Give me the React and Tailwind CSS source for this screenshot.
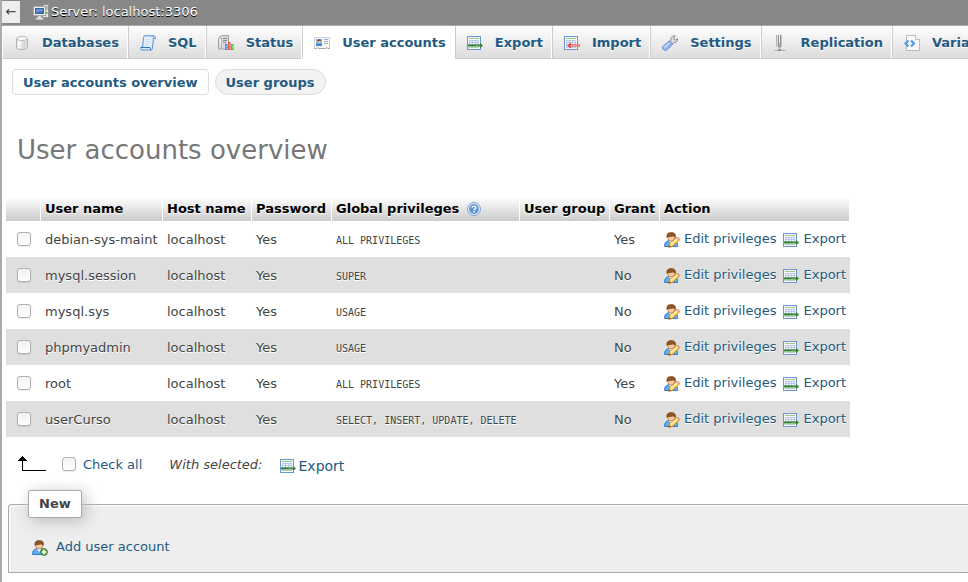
import React from "react";

function Icon({ children, className = "" }) {
  return (
    <svg
      width="16"
      height="16"
      viewBox="0 0 16 16"
      aria-hidden="true"
      className={"shrink-0 " + className}
    >
      {children}
    </svg>
  );
}

function ServerIcon() {
  return (
    <Icon>
      <path d="M9.500 2l2-1.500h4v12l-1 1h-5z" fill="#dfe1dd" stroke="#90948d" />
      <path d="M11.500 3h3M11.500 5h3" stroke="#777" />
      <path d="M13 8h1.500v1.500H13z" fill="#55a630" />
      <rect x=".5" y="2.500" width="12" height="9" fill="#eceeea" stroke="#a5a8a2" />
      <rect x="2" y="4" width="9" height="6" fill="#3465a4" />
      <path d="M3 5h7v2L3 9z" fill="#6b93c8" />
      <path d="M5 12h3v2h2v1.500H3V14h2z" fill="#e8e8e8" stroke="#bbb" strokeWidth=".5" />
    </Icon>
  );
}

function DatabaseIcon() {
  return (
    <Icon>
      <path d="M2.500 3.500v9c0 1.300 2.500 2 5.500 2s5.500-.7 5.500-2v-9z" fill="#e8e8e8" stroke="#b0b0b0" />
      <path d="M4.500 5v8.500M6 5.500v8" stroke="#fff" />
      <path d="M9 6v8M10.500 5.500v8M12 5v8" stroke="#d4d4d4" />
      <ellipse cx="8" cy="3.500" rx="5.500" ry="2" fill="#f7f7f7" stroke="#bdbdbd" />
    </Icon>
  );
}

function SqlIcon() {
  return (
    <Icon>
      <path d="M4.500.8h9.700c1 0 1.300 1.200 1.300 2.700h-2l-1 9.500c-.1 1.300-.8 2-1.500 2H1.800C.8 15 .5 14 .5 12.500h2l1-9C3.600 2 3.800.8 4.500.8z" fill="#d6e8fb" stroke="#5b94d2" />
      <path d="M5 2.300h6.800L10.800 12H4z" fill="#eaf4ff" />
      <path d="M5.500 4.500h5M5.200 6.500h5M5 8.500h5M4.700 10.500h5" stroke="#c6def7" />
      <path d="M1 12.500h9l1 2.500" stroke="#3972b4" fill="none" />
      <path d="M13.500 3.500c0-1.500-.5-2-1.500-2.500" stroke="#7aabe0" fill="none" />
    </Icon>
  );
}

function StatusIcon() {
  return (
    <Icon>
      <path d="M.5 3l3-2.500h7v11l-2.500 2.500h-7.500z" fill="#d9d9d9" stroke="#a2a2a2" />
      <path d="M.5 3h3v11" stroke="#b5b5b5" fill="#eee" />
      <path d="M5 3.500h4M5 5.500h4M5 7.500h3" stroke="#888" />
      <rect x="7" y="9" width="2.500" height="6" fill="#4d7ff0" />
      <rect x="7.800" y="10" width="1" height="4" fill="#8db0ff" />
      <rect x="10" y="7" width="2.500" height="8" fill="#f04a3a" />
      <rect x="10.800" y="8" width="1" height="6" fill="#ff9488" />
      <rect x="13" y="9" width="2.500" height="6" fill="#41b838" />
      <rect x="13.800" y="10" width="1" height="4" fill="#93e689" />
    </Icon>
  );
}

function CardIcon() {
  return (
    <Icon>
      <path d="M.5 2.500h15v11h-1.500l-1-1-1.500 1h-6l-1.500-1-1 1H.5z" fill="#f8f8f8" stroke="#cfcfcf" />
      <path d="M.5 13.500h2l1-1 1 1h7l1-1 1 1h2" stroke="#a5a5a5" fill="none" />
      <rect x="2" y="4" width="6" height="7" fill="#6cb1f3" />
      <path d="M2 11c0-2 1-2.500 3-2.500S8 9 8 11z" fill="#3485db" />
      <circle cx="5" cy="6.700" r="1.800" fill="#efb987" />
      <path d="M3.200 6.200c0-2.200 3.600-2.200 3.600 0-1-.7-2-.7-3.600 0z" fill="#774317" />
      <path d="M10 4.500h4M10 6.500h4M10 8.500h4" stroke="#9eb1c4" />
    </Icon>
  );
}

function SheetShape() {
  return (
    <>
      <rect x=".5" y="1.500" width="13" height="13" fill="#f5f9ff" stroke="#6c95d3" />
      <path d="M2 3.500h10" stroke="#9acb7f" />
      <path d="M2.500 5.500h9M2.500 7.500h9M2.500 9.500h9M2.500 12.500h9M2.500 5.500v7M5.500 5.500v7M8.500 5.500v7M11.500 5.500v7" stroke="#b4c8e6" fill="none" />
    </>
  );
}

function ExportIcon({ className }) {
  return (
    <Icon className={className}>
      <SheetShape />
      <path d="M1 9.500h12V8l3 2.500-3 2.500v-1.500H1z" fill="#2c7a29" />
      <path d="M1 11.500h11v1H1z" fill="#a8d49a" />
      <path d="M8 10.500h6" stroke="#5fa54f" strokeWidth=".6" />
    </Icon>
  );
}

function ImportIcon() {
  return (
    <Icon>
      <SheetShape />
      <path d="M16 9.500H7V7.500l-4 3 4 3v-2h9z" fill="#e94343" />
      <path d="M6 10.500h9.500" stroke="#ffb0aa" strokeWidth=".8" />
    </Icon>
  );
}

function WrenchIcon() {
  return (
    <Icon>
      <path d="M8 7l1-1.500c-.8-2.200.6-4.500 3.300-4.900l1.200.4-1.800 2 .5 1.500 1.600.5 1.800-1.500c.4 2.600-1.500 4.800-4.100 4.200L10 9.500z" fill="#dcdcdc" stroke="#8d8d8d" />
      <path d="M7.500 5.700l3.300 3.300-5.500 5.600c-1.200 1.200-2.900 1-3.900 0s-1-2.700 0-3.700z" fill="#93b7ee" stroke="#6a8dd0" />
      <path d="M7.500 7.500l-5 5" stroke="#cadffc" strokeWidth="1.500" />
    </Icon>
  );
}

function ReplicationIcon() {
  return (
    <Icon>
      <path d="M3.500 0v11.500" stroke="#b3b3b3" />
      <path d="M4.500 0v12.500" stroke="#dadada" />
      <path d="M5.500 0v12.500M7.500 0v12.500" stroke="#8f8f8f" />
      <path d="M6.500 8v6" stroke="#b5b5b5" />
      <path d="M8.500 0v11.500" stroke="#c4c4c4" />
      <path d="M1 15.500h12" stroke="#b3b3b3" />
      <path d="M3 14.500h8" stroke="#dcdcdc" />
      <path d="M5 14h3v2H5z" fill="#8f8f8f" />
    </Icon>
  );
}

function VariablesIcon() {
  return (
    <Icon>
      <path d="M2.500.5h9l4 4v11h-13z" fill="#f8f8f8" stroke="#bcbcbc" />
      <path d="M11.500.5v4h4" fill="#fff" stroke="#bcbcbc" />
      <path d="M4.500 5.500L1.500 8.500l3 3M7 5.500l3 3-3 3" fill="none" stroke="#4a98ea" strokeWidth="2" />
    </Icon>
  );
}

function PersonShape() {
  return (
    <>
      <path d="M.6 14.500c-.4-3 1-5 3.600-5.700h6c2.400.5 3.800 2.700 3.400 5.700z" fill="#5fadf3" stroke="#2d72c0" strokeWidth=".9" />
      <path d="M4.800 9h4.900l-2.400 2.800z" fill="#fff" />
      <ellipse cx="7.200" cy="5.600" rx="3.500" ry="3.400" fill="#f8c898" stroke="#b8743c" strokeWidth=".7" />
      <path d="M2.900 5.300C2.400 2 4.400.6 7.200.6s4.900 1.400 4.300 4.700c-.8-.2-1.400-.8-1.700-1.400-1.700.6-4.300.3-6.900 1.400z" fill="#8f5726" stroke="#6b3c16" strokeWidth=".6" />
    </>
  );
}

function UserEditIcon({ className }) {
  return (
    <Icon className={className}>
      <PersonShape />
      <path d="M4.600 15.300l1-3.800 6.600-5.600c1-.7 2-.5 2.700.3s.7 1.900-.1 2.700l-6.500 5.500z" fill="#ffd666" stroke="#c9852a" strokeWidth=".9" />
      <path d="M6.800 12.300l6.200-5.300" stroke="#fff3bd" strokeWidth="1.200" />
      <path d="M4.600 15.300l.6-2 1.600 1.600z" fill="#6c4520" />
      <path d="M12.600 6.300l2 2.200 1-1.300-1.500-1.700z" fill="#f3a79b" />
    </Icon>
  );
}

function UserAddIcon({ className }) {
  return (
    <Icon className={className}>
      <PersonShape />
      <circle cx="12" cy="12" r="3.400" fill="#6fb04d" stroke="#39752a" strokeWidth=".9" />
      <path d="M12 9.800v4.400M9.800 12h4.400" stroke="#fff" strokeWidth="1.500" />
    </Icon>
  );
}

function HelpIcon() {
  return (
    <Icon>
      <circle cx="8" cy="8" r="6.500" fill="#e3edfb" stroke="#7ea3d3" />
      <circle cx="8" cy="8" r="4.900" fill="#6595d1" />
      <path d="M6.200 6.700c0-2.200 3.700-2.100 3.700 0 0 1.200-1.800 1.200-1.800 2.500" fill="none" stroke="#fff" strokeWidth="1.400" />
      <rect x="7.300" y="10" width="1.500" height="1.500" fill="#fff" />
    </Icon>
  );
}

const tabs = [
  { label: "Databases", icon: DatabaseIcon },
  { label: "SQL", icon: SqlIcon },
  { label: "Status", icon: StatusIcon },
  { label: "User accounts", icon: CardIcon, active: true },
  { label: "Export", icon: ExportIcon },
  { label: "Import", icon: ImportIcon },
  { label: "Settings", icon: WrenchIcon },
  { label: "Replication", icon: ReplicationIcon },
  { label: "Variables", icon: VariablesIcon },
];

const users = [
  { name: "debian-sys-maint", privileges: "ALL PRIVILEGES", grant: "Yes" },
  { name: "mysql.session", privileges: "SUPER", grant: "No" },
  { name: "mysql.sys", privileges: "USAGE", grant: "No" },
  { name: "phpmyadmin", privileges: "USAGE", grant: "No" },
  { name: "root", privileges: "ALL PRIVILEGES", grant: "Yes" },
  { name: "userCurso", privileges: "SELECT, INSERT, UPDATE, DELETE", grant: "No" },
];

const checkbox =
  "block size-[14px] shrink-0 appearance-none rounded-[3px] border border-[#b0b0b0] bg-linear-to-b from-[#f2f2f2] to-white shadow-[0_1px_1px_rgba(0,0,0,0.08)] checked:bg-[#235a81] checked:bg-none";
const th =
  "border-r border-white bg-linear-to-b from-white to-[#cccccc] px-1 text-left font-bold text-black [text-shadow:0_1px_0_#fff]";
const td = "px-1 pt-[2px]";

function TopMenu() {
  return (
    <nav className="flex h-[33px] overflow-hidden">
      {tabs.map(({ label, icon: TabIcon, active }) => (
        <a
          key={label}
          href="#"
          className={
            "flex shrink-0 items-center gap-[12px] border-x border-b border-r-white border-l-[#cccccc] pt-px pr-[8px] pl-[11px] font-bold text-[#235a81] [text-shadow:0_1px_0_#fff] first:border-l-white " +
            (active
              ? "border-b-white bg-white"
              : "border-b-[#cccccc] bg-linear-to-b from-white to-[#dcdcdc]")
          }
        >
          <TabIcon />
          {label}
        </a>
      ))}
    </nav>
  );
}

function UsersTable() {
  return (
    <table className="w-[844px] table-fixed border-separate border-spacing-0">
      <colgroup>
        <col className="w-[35px]" />
        <col className="w-[122px]" />
        <col className="w-[89px]" />
        <col className="w-[80px]" />
        <col className="w-[188px]" />
        <col className="w-[90px]" />
        <col className="w-[50px]" />
        <col className="w-[190px]" />
      </colgroup>
      <thead>
        <tr className="h-[24px] whitespace-nowrap">
          <th className={th}></th>
          <th className={th}>User name</th>
          <th className={th}>Host name</th>
          <th className={th}>Password</th>
          <th className={th}>
            <span className="flex items-center gap-[7px]">
              Global privileges
              <a href="#" aria-label="Documentation">
                <HelpIcon />
              </a>
            </span>
          </th>
          <th className={th}>User group</th>
          <th className={th}>Grant</th>
          <th className={th}>Action</th>
        </tr>
      </thead>
      <tbody>
        {users.map((user) => (
          <tr
            key={user.name}
            className="h-[36px] whitespace-nowrap even:bg-[#dfdfdf] even:[text-shadow:0_1px_0_#fff]"
          >
            <td className="pl-[11px]">
              <input type="checkbox" id={"user-" + user.name} className={checkbox} />
            </td>
            <td className={td}>
              <label htmlFor={"user-" + user.name}>{user.name}</label>
            </td>
            <td className={td}>localhost</td>
            <td className={td}>Yes</td>
            <td className={td}>
              <code className="font-['DejaVu_Sans_Mono',monospace] text-[10px]">
                {user.privileges}
              </code>
            </td>
            <td></td>
            <td className={td}>{user.grant}</td>
            <td className="px-1">
              <span className="flex items-center gap-[7px]">
                <a href="#" className="flex items-center gap-1 text-[#235a81]">
                  <UserEditIcon className="mt-[2px]" />
                  Edit privileges
                </a>
                <a href="#" className="flex items-center gap-1 text-[#235a81]">
                  <ExportIcon className="mt-[2px]" />
                  Export
                </a>
              </span>
            </td>
          </tr>
        ))}
      </tbody>
    </table>
  );
}

export default function App() {
  return (
    <div className="min-h-screen overflow-hidden border-l-2 border-[#aaaaaa] bg-white font-['DejaVu_Sans',sans-serif] text-[13px] leading-[16px] text-[#444444]">
      <header className="flex h-[26px] items-start border-b border-[#aaaaaa] bg-[#888888] text-white">
        <button
          type="button"
          aria-label="Hide panel"
          className="mt-px h-[22px] w-[18px] bg-[#eeeeee] text-[#333333]"
        >
          ←
        </button>
        <a
          href="#"
          className="ml-[13px] flex h-[24px] items-center gap-[2px] [text-shadow:0_1px_0_#000]"
        >
          <ServerIcon />
          Server: localhost:3306
        </a>
      </header>
      <TopMenu />
      <div className="flex gap-[6px] px-[10px] pt-[10px] font-bold text-[#235a81]">
        <a
          href="#"
          className="rounded-[4px] border border-[#dddddd] bg-white px-[10px] pt-[5px] pb-[3px]"
        >
          User accounts overview
        </a>
        <a
          href="#"
          className="rounded-full border border-[#dddddd] bg-[#f2f2f2] px-[10px] pt-[5px] pb-[3px]"
        >
          User groups
        </a>
      </div>
      <main>
        <h2 className="px-[15px] pt-[39px] pb-[31px] text-[26px] leading-[32px] text-[#777777]">
          User accounts overview
        </h2>
        <form className="pl-1">
          <UsersTable />
          <div className="flex h-[53px] items-center pl-3">
            <svg width="28" height="16" viewBox="0 0 28 16" aria-hidden="true">
              <path d="M4 3h1v11h23v1H4zM4 0h1v1h1v1h1v1h1v1h1v1H0V4h1V3h1V2h1V1h1z" fill="#000" />
            </svg>
            <span className="ml-[16px] flex items-center gap-[7px]">
              <input type="checkbox" id="check-all" className={checkbox} />
              <label htmlFor="check-all" className="pt-[2px] text-[#235a81]">
                Check all
              </label>
            </span>
            <i className="ml-[27px] pt-[2px]">With selected:</i>
            <button
              type="button"
              className="ml-[17px] flex items-center gap-[3px] pt-[5px] text-[14px] text-[#235a81]"
            >
              <ExportIcon />
              Export
            </button>
          </div>
        </form>
        <fieldset className="ml-[6px] rounded-tl-[4px] border border-r-0 border-[#aaaaaa] bg-[#eeeeee] px-[23px] pt-[20px] pb-[16px] shadow-[inset_1px_1px_2px_#fff]">
          <legend className="-ml-[4px] rounded-[2px] border border-[#aaaaaa] bg-white px-[10px] py-[5px] font-bold shadow-[3px_3px_15px_#bbbbbb]">
            New
          </legend>
          <a href="#" className="flex w-fit items-center gap-[8px] text-[#235a81]">
            <UserAddIcon className="mt-[2px]" />
            Add user account
          </a>
        </fieldset>
      </main>
    </div>
  );
}
